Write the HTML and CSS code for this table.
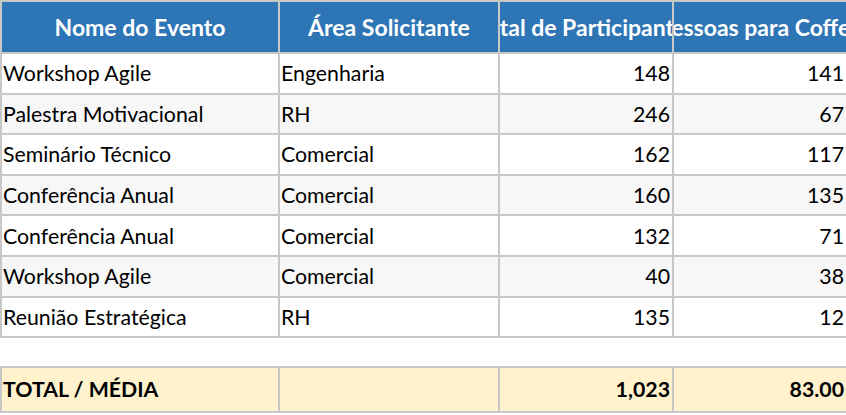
FILE: index.html
```html
<!DOCTYPE html>
<html lang="pt">
<head>
<meta charset="utf-8">
<link rel="stylesheet" href="styles.css">
</head>
<body>
<table class="sheet">
  <colgroup>
    <col class="c1"><col class="c2"><col class="c3"><col class="c4">
  </colgroup>
  <thead>
    <tr class="head">
      <th><div class="clip">Nome do Evento</div></th>
      <th><div class="clip">Área Solicitante</div></th>
      <th><div class="clip">Total de Participantes</div></th>
      <th><div class="clip">Pessoas para Coffee</div></th>
    </tr>
  </thead>
  <tbody>
    <tr><td>Workshop Agile</td><td>Engenharia</td><td class="num">148</td><td class="num">141</td></tr>
    <tr class="alt"><td>Palestra Motivacional</td><td>RH</td><td class="num">246</td><td class="num">67</td></tr>
    <tr><td>Seminário Técnico</td><td>Comercial</td><td class="num">162</td><td class="num">117</td></tr>
    <tr class="alt"><td>Conferência Anual</td><td>Comercial</td><td class="num">160</td><td class="num">135</td></tr>
    <tr><td>Conferência Anual</td><td>Comercial</td><td class="num">132</td><td class="num">71</td></tr>
    <tr class="alt"><td>Workshop Agile</td><td>Comercial</td><td class="num">40</td><td class="num">38</td></tr>
    <tr><td>Reunião Estratégica</td><td>RH</td><td class="num">135</td><td class="num">12</td></tr>
  </tbody>
</table>
<table class="sheet total">
  <colgroup>
    <col class="c1"><col class="c2"><col class="c3"><col class="c4">
  </colgroup>
  <tbody>
    <tr><td>TOTAL / MÉDIA</td><td></td><td class="num">1,023</td><td class="num">83.00</td></tr>
  </tbody>
</table>
</body>
</html>
```
FILE: styles.css
```css
html, body {
  margin: 0;
  padding: 0;
  background: #ffffff;
}
body {
  font-family: "Lato", "Carlito", "Liberation Sans", sans-serif;
  font-size: 21.3px;
  color: #000000;
}
.sheet {
  border-collapse: collapse;
  table-layout: fixed;
  width: 846px;
}
.c1 { width: 278px; }
.c2 { width: 220px; }
.c3 { width: 174px; }
.c4 { width: 174px; }
.sheet th, .sheet td {
  border: 2px solid #c8c8c8;
  padding: 0 2px 0 1px;
  overflow: hidden;
  white-space: nowrap;
  text-align: left;
}
.head th {
  background: #2e75b6;
  color: #ffffff;
  font-weight: 700;
  font-size: 23px;
  height: 50px;
  text-align: center;
  padding: 0;
}
.clip {
  display: flex;
  justify-content: center;
  overflow: hidden;
  white-space: nowrap;
}
.sheet tbody td {
  height: 38.6px;
  line-height: 24px;
}
.sheet tr.alt td {
  background: #f7f7f7;
}
.sheet td.num {
  text-align: right;
}
.total {
  margin-top: 28px;
}
.total td {
  background: #fff2cc;
  font-weight: 700;
  height: 42.5px !important;
}
```
